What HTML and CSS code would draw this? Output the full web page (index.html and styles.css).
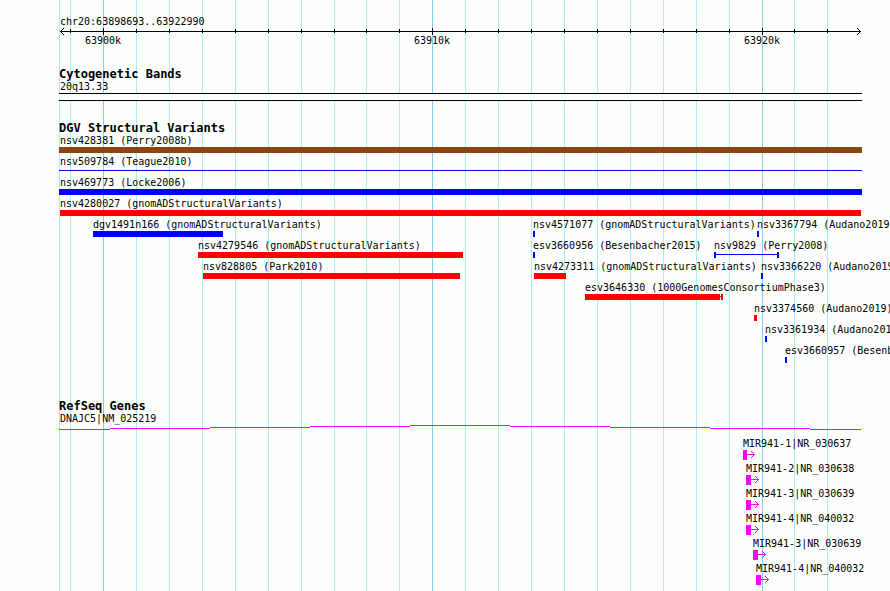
FILE: index.html
```html
<!DOCTYPE html>
<html lang="en">
<head>
  <meta charset="UTF-8" />
  <meta name="viewport" content="width=device-width, initial-scale=1.0" />
  <title>chr20:63898693..63922990</title>
  <link rel="stylesheet" href="styles.css">
</head>
<body>
  <main class="browser">
    <!-- Grid lines, --x is the offset on the 803 unit scale -->
    <div class="grid" aria-hidden="true">
      <i style="--x:0"></i>
      <i style="--x:11"></i>
      <i class="major" style="--x:44"></i>
      <i style="--x:77"></i>
      <i style="--x:110"></i>
      <i style="--x:143"></i>
      <i style="--x:176"></i>
      <i style="--x:209"></i>
      <i style="--x:242"></i>
      <i style="--x:275"></i>
      <i style="--x:307"></i>
      <i style="--x:340"></i>
      <i class="major" style="--x:373"></i>
      <i style="--x:406"></i>
      <i style="--x:439"></i>
      <i style="--x:472"></i>
      <i style="--x:505"></i>
      <i style="--x:538"></i>
      <i style="--x:571"></i>
      <i style="--x:604"></i>
      <i style="--x:637"></i>
      <i style="--x:670"></i>
      <i class="major" style="--x:703"></i>
      <i style="--x:735"></i>
      <i style="--x:768"></i>
    </div>

    <!-- Ruler -->
    <header class="track">
      <div class="region">chr20:63898693..63922990</div>
      <div class="ruler">
        <svg class="tip" viewBox="0 0 4 7"><path d="M3 0h1v1h-1zM2 1h1v1h-1zM1 2h1v1h-1zM0 3h4v1h-4zM1 4h1v1h-1zM2 5h1v1h-1zM3 6h1v1h-1z"/></svg>
        <i style="--x:11"></i>
        <i class="major" style="--x:44"></i>
        <i style="--x:77"></i>
        <i style="--x:110"></i>
        <i style="--x:143"></i>
        <i style="--x:176"></i>
        <i style="--x:209"></i>
        <i style="--x:242"></i>
        <i style="--x:275"></i>
        <i style="--x:307"></i>
        <i style="--x:340"></i>
        <i class="major" style="--x:373"></i>
        <i style="--x:406"></i>
        <i style="--x:439"></i>
        <i style="--x:472"></i>
        <i style="--x:505"></i>
        <i style="--x:538"></i>
        <i style="--x:571"></i>
        <i style="--x:604"></i>
        <i style="--x:637"></i>
        <i style="--x:670"></i>
        <i class="major" style="--x:703"></i>
        <i style="--x:735"></i>
        <i style="--x:768"></i>
        <svg class="tip end" viewBox="0 0 4 7"><path d="M0 0h1v1h-1zM1 1h1v1h-1zM2 2h1v1h-1zM0 3h4v1h-4zM2 4h1v1h-1zM1 5h1v1h-1zM0 6h1v1h-1z"/></svg>
      </div>
      <div class="scale">
        <span style="--x:44">63900k</span>
        <span style="--x:373">63910k</span>
        <span style="--x:703">63920k</span>
      </div>
    </header>

    <!-- Cytogenetic bands -->
    <section class="track">
      <h2>Cytogenetic Bands</h2>
      <div class="feature whole">
        <span class="label">20q13.33</span>
        <div class="band"></div>
      </div>
    </section>

    <!-- Structural variants -->
    <section class="track variants">
      <h2>DGV Structural Variants</h2>
      <div class="row">
        <div class="feature whole"><span class="label">nsv428381 (Perry2008b)</span><div class="bar brown"></div></div>
      </div>
      <div class="row">
        <div class="feature whole"><span class="label">nsv509784 (Teague2010)</span><div class="bar thin"></div></div>
      </div>
      <div class="row">
        <div class="feature whole"><span class="label">nsv469773 (Locke2006)</span><div class="bar blue"></div></div>
      </div>
      <div class="row">
        <div class="feature" style="--x:1; --w:801"><span class="label">nsv4280027 (gnomADStructuralVariants)</span><div class="bar red"></div></div>
      </div>
      <div class="row">
        <div class="feature" style="--x:34; --w:130"><span class="label">dgv1491n166 (gnomADStructuralVariants)</span><div class="bar blue"></div></div>
        <div class="feature" style="--x:474; --w:2"><span class="label">nsv4571077 (gnomADStructuralVariants)</span><div class="bar blue"></div></div>
        <div class="feature" style="--x:698; --w:2"><span class="label">nsv3367794 (Audano2019)</span><div class="bar blue"></div></div>
      </div>
      <div class="row">
        <div class="feature" style="--x:139; --w:265"><span class="label">nsv4279546 (gnomADStructuralVariants)</span><div class="bar red"></div></div>
        <div class="feature" style="--x:474; --w:2"><span class="label">esv3660956 (Besenbacher2015)</span><div class="bar blue"></div></div>
        <div class="feature" style="--x:655; --w:65"><span class="label">nsv9829 (Perry2008)</span><div class="bar thin ends"></div></div>
      </div>
      <div class="row">
        <div class="feature" style="--x:144; --w:257"><span class="label">nsv828805 (Park2010)</span><div class="bar red"></div></div>
        <div class="feature" style="--x:475; --w:32"><span class="label">nsv4273311 (gnomADStructuralVariants)</span><div class="bar red"></div></div>
        <div class="feature" style="--x:702; --w:2"><span class="label">nsv3366220 (Audano2019)</span><div class="bar blue"></div></div>
      </div>
      <div class="row">
        <div class="feature" style="--x:526; --w:138"><span class="label">esv3646330 (1000GenomesConsortiumPhase3)</span><div class="bar split"></div></div>
      </div>
      <div class="row">
        <div class="feature" style="--x:695; --w:3"><span class="label">nsv3374560 (Audano2019)</span><div class="bar red"></div></div>
      </div>
      <div class="row">
        <div class="feature" style="--x:706; --w:2"><span class="label">nsv3361934 (Audano2019)</span><div class="bar blue"></div></div>
      </div>
      <div class="row">
        <div class="feature" style="--x:726; --w:2"><span class="label">esv3660957 (Besenbacher2015)</span><div class="bar blue"></div></div>
      </div>
    </section>

    <!-- Genes -->
    <section class="track genes">
      <h2>RefSeq Genes</h2>
      <div class="row">
        <div class="feature whole">
          <span class="label">DNAJC5|NM_025219</span>
          <svg class="intron" viewBox="0 0 803 10" preserveAspectRatio="none"><path d="M0 4h51v1h-51zM51 3h100v1h-100zM151 2h100v1h-100zM251 1h100v1h-100zM351 0h100v1h-100zM451 1h100v1h-100zM551 2h100v1h-100zM651 3h100v1h-100zM751 4h51v1h-51z"/></svg>
        </div>
      </div>
      <div class="row">
        <div class="feature" style="--x:684; --w:4"><span class="label">MIR941-1|NR_030637</span><div class="gene"><svg class="arrow" viewBox="0 0 8 7"><path d="M0 3h8v1h-8zM4 0h1v1h-1zM5 1h1v1h-1zM6 2h1v1h-1zM6 4h1v1h-1zM5 5h1v1h-1zM4 6h1v1h-1z"/></svg></div></div>
      </div>
      <div class="row">
        <div class="feature" style="--x:687; --w:5"><span class="label">MIR941-2|NR_030638</span><div class="gene"><svg class="arrow" viewBox="0 0 8 7"><path d="M0 3h8v1h-8zM4 0h1v1h-1zM5 1h1v1h-1zM6 2h1v1h-1zM6 4h1v1h-1zM5 5h1v1h-1zM4 6h1v1h-1z"/></svg></div></div>
      </div>
      <div class="row">
        <div class="feature" style="--x:687; --w:5"><span class="label">MIR941-3|NR_030639</span><div class="gene"><svg class="arrow" viewBox="0 0 8 7"><path d="M0 3h8v1h-8zM4 0h1v1h-1zM5 1h1v1h-1zM6 2h1v1h-1zM6 4h1v1h-1zM5 5h1v1h-1zM4 6h1v1h-1z"/></svg></div></div>
      </div>
      <div class="row">
        <div class="feature" style="--x:687; --w:5"><span class="label">MIR941-4|NR_040032</span><div class="gene"><svg class="arrow" viewBox="0 0 8 7"><path d="M0 3h8v1h-8zM4 0h1v1h-1zM5 1h1v1h-1zM6 2h1v1h-1zM6 4h1v1h-1zM5 5h1v1h-1zM4 6h1v1h-1z"/></svg></div></div>
      </div>
      <div class="row">
        <div class="feature" style="--x:694; --w:5"><span class="label">MIR941-3|NR_030639</span><div class="gene"><svg class="arrow" viewBox="0 0 8 7"><path d="M0 3h8v1h-8zM4 0h1v1h-1zM5 1h1v1h-1zM6 2h1v1h-1zM6 4h1v1h-1zM5 5h1v1h-1zM4 6h1v1h-1z"/></svg></div></div>
      </div>
      <div class="row">
        <div class="feature" style="--x:697; --w:5"><span class="label">MIR941-4|NR_040032</span><div class="gene"><svg class="arrow" viewBox="0 0 8 7"><path d="M0 3h8v1h-8zM4 0h1v1h-1zM5 1h1v1h-1zM6 2h1v1h-1zM6 4h1v1h-1zM5 5h1v1h-1zM4 6h1v1h-1z"/></svg></div></div>
      </div>
    </section>
  </main>
</body>
</html>
```

FILE: styles.css
```css
* {
  box-sizing: border-box;
}
body {
  margin: 0;
  background: #fdfffd;
  color: #000;
  font-family: "DejaVu Sans Mono", "Liberation Mono", monospace;
  font-size: 10px;
  line-height: 12px;
  overflow-x: hidden;
}
svg {
  display: block;
  shape-rendering: crispEdges;
}
/* Plot area */
.browser {
  position: relative;
  min-height: 100vh;
  margin: 0 28px 0 59px;
  padding-top: 16px;
}
.track {
  position: relative;
  margin-bottom: 20px;
}
.track h2 {
  margin: 0;
  font-size: 12px;
  line-height: 14px;
}
/* Vertical lines behind the tracks */
.grid {
  position: absolute;
  inset: 0;
}
.grid i {
  position: absolute;
  top: 0;
  bottom: 0;
  left: calc(var(--x) * 100% / 803);
  width: 1px;
  background: #afeeee;
}
.grid .major {
  background: #87ceeb;
}
/* Ruler */
.region {
  padding-left: 1px;
}
.ruler {
  position: relative;
  height: 7px;
  background: linear-gradient(#000, #000) 1px 3px / calc(100% - 2px) 1px no-repeat;
}
.ruler i {
  position: absolute;
  top: 1px;
  left: calc(var(--x) * 100% / 803);
  width: 1px;
  height: 4px;
  background: #000;
}
.ruler .major {
  top: 0;
  height: 7px;
}
.tip {
  position: absolute;
  left: 1px;
  width: 4px;
  height: 7px;
}
.tip.end {
  left: auto;
  right: 1px;
}
.scale {
  display: grid;
  grid-template-columns: minmax(0, 1fr);
}
.scale span {
  grid-area: 1 / 1;
  width: 36px;
  margin-left: calc(var(--x) * 100% / 803 - 18px);
}
/* Features, all items of a row share one grid cell */
.row {
  display: grid;
  grid-template-columns: minmax(0, 1fr);
  margin-bottom: 3px;
}
.feature {
  grid-area: 1 / 1;
  width: calc(var(--w) * 100% / 803);
  margin-left: calc(var(--x) * 100% / 803);
}
.feature.whole {
  width: 100%;
  margin-left: 0;
}
.label {
  display: block;
  white-space: nowrap;
}
.whole .label {
  margin-left: 1px;
}
.band {
  height: 8px;
  background: #fff;
  border: solid #000;
  border-width: 1px 0;
}
.bar {
  height: 6px;
}
.brown {
  background: #8b4513;
}
.blue {
  background: #00f;
}
.red {
  background: #f00;
}
.thin {
  background: linear-gradient(#00f, #00f) 0 2px / 100% 1px no-repeat;
}
.ends {
  border: solid #00f;
  border-width: 0 2px;
}
.split {
  background:
    linear-gradient(#f00, #f00) 0 0 / calc(100% - 3px) 100% no-repeat,
    linear-gradient(#f00, #f00) 0 2px / 100% 1px no-repeat;
  background-origin: border-box;
  border-right: 2px solid #f00;
}
/* Genes */
.variants {
  margin-bottom: 36px;
}
.genes {
  margin-bottom: 0;
}
.genes svg {
  fill: #f0f;
}
.intron {
  width: 100%;
  height: 10px;
}
.gene {
  position: relative;
  height: 10px;
  background: #f0f;
}
.arrow {
  position: absolute;
  top: 1px;
  left: 100%;
  width: 8px;
  height: 7px;
}
```
